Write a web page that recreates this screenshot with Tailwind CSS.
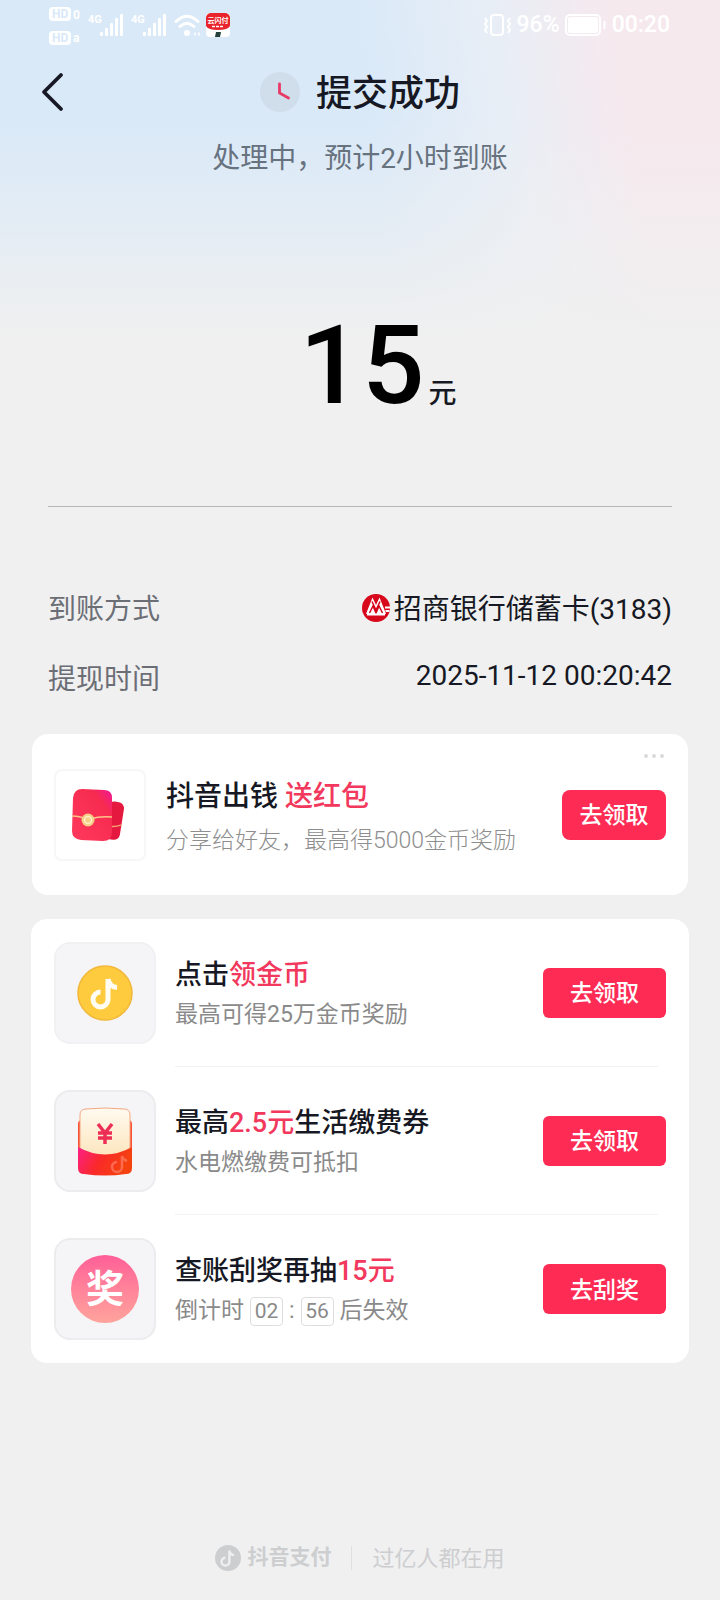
<!DOCTYPE html>
<html lang="zh-CN">
<head>
<meta charset="utf-8">
<meta name="viewport" content="width=device-width, initial-scale=1">
<title>提交成功</title>
<script src="https://cdn.jsdelivr.net/npm/@tailwindcss/browser@4"></script>
</head>
<body class="bg-[#f0f0f0] text-[#161823] [font-family:Roboto,'Noto_Sans_CJK_SC',sans-serif]">
<div class="flex min-h-screen flex-col bg-[linear-gradient(to_bottom,transparent_0,transparent_35%,#f0f0f0_100%),linear-gradient(82deg,#d9e9f8_52%,#e8eef6_70%,#f6e9ee_86%)] bg-[length:100%_340px] bg-no-repeat">

  <!-- Status bar -->
  <div class="flex h-[50px] items-center justify-between pr-[50px] pl-[49px] text-white">
    <div class="flex items-center">
      <svg class="h-[42px] w-[34px]" viewBox="0 0 34 42" fill="none">
        <g fill="#fff">
          <rect y="3" width="22" height="14" rx="4"/><rect y="27" width="22" height="14" rx="4"/>
        </g>
        <g font-family="Roboto, sans-serif" font-weight="700">
          <text x="3" y="14" font-size="12" fill="#d9e9f8">HD</text>
          <text x="3" y="38" font-size="12" fill="#d9e9f8">HD</text>
          <text x="24" y="15" font-size="12" fill="#fff">0</text>
          <text x="24" y="38" font-size="12" fill="#fff">a</text>
        </g>
      </svg>
      <svg class="ml-[5px] h-[26px] w-[36px]" viewBox="0 0 36 26" fill="#fff">
        <text x="0" y="11" font-family="Roboto, sans-serif" font-size="11" font-weight="700">4G</text>
        <rect x="12" y="20" width="3" height="4" rx="1"/><rect x="17" y="16" width="3" height="8" rx="1"/><rect x="22" y="11" width="3" height="13" rx="1"/><rect x="27" y="6" width="3" height="18" rx="1"/><rect x="32" y="2" width="3" height="22" rx="1"/>
      </svg>
      <svg class="ml-[7px] h-[26px] w-[36px]" viewBox="0 0 36 26" fill="#fff">
        <text x="0" y="11" font-family="Roboto, sans-serif" font-size="11" font-weight="700">4G</text>
        <rect x="12" y="20" width="3" height="4" rx="1"/><rect x="17" y="16" width="3" height="8" rx="1"/><rect x="22" y="11" width="3" height="13" rx="1"/><rect x="27" y="6" width="3" height="18" rx="1"/><rect x="32" y="2" width="3" height="22" rx="1"/>
      </svg>
      <svg class="ml-[7px] h-[26px] w-[26px]" viewBox="0 0 26 26" fill="none" stroke="#fff" stroke-width="3" stroke-linecap="round">
        <path d="M2 9.500Q13 -1 24 9.500M6 14.500Q13 8 20 14.500"/><circle cx="13" cy="21" r="3" fill="#fff" stroke="none"/>
        <path d="M21 21v2M25 21v2" stroke-width="1.500"/>
      </svg>
      <svg class="ml-[5px] h-[24px] w-[26px]" viewBox="0 0 26 24">
        <rect x="1" width="24" height="24" rx="4" fill="#fff"/>
        <path d="M1 5a5 5 0 0 1 5-5h14a5 5 0 0 1 5 5v8q-2 4-12 4T1 13z" fill="#e8232b"/>
        <path d="M11 19h5l-1 5h-5z" fill="#23403c"/>
        <text x="13" y="10" text-anchor="middle" font-family="'Noto Sans CJK SC', sans-serif" font-size="7" font-weight="700" fill="#fff">云闪付</text>
        <path d="M7 13.500h12" stroke="#fff" stroke-width="1.500" stroke-dasharray="3 1"/>
      </svg>
    </div>
    <div class="flex items-center text-[23px] font-medium">
      <svg class="h-[24px] w-[30px]" viewBox="0 0 30 24" fill="none" stroke="#fff" stroke-width="2">
        <rect x="8" y="2" width="12" height="20" rx="3"/><path d="M2 5l2 3-2 3 2 3-2 3 2 3M27 5l-2 3 2 3-2 3 2 3-2 3"/>
      </svg>
      <span class="ml-1">96%</span>
      <svg class="ml-1 h-[24px] w-[44px]" viewBox="0 0 44 24" fill="none" stroke="#fff" stroke-width="2">
        <rect x="2" y="2" width="34" height="20" rx="4"/><rect x="5" y="5" width="28" height="14" rx="1" fill="#fff"/><path d="M40.500 8v8"/>
      </svg>
      <span class="ml-1">00:20</span>
    </div>
  </div>

  <header class="grid h-[84px] grid-cols-[1fr_auto_1fr] items-center px-10">
    <button type="button" aria-label="返回" class="justify-self-start">
      <svg class="h-10 w-6" viewBox="0 0 24 40" fill="none" stroke="#161823" stroke-width="3.800" stroke-linecap="round" stroke-linejoin="round"><path d="M21 3L4 20l17 17"/></svg>
    </button>
    <h1 class="flex items-center gap-4 text-[36px] font-medium">
      <svg class="size-10" viewBox="0 0 40 40" fill="none"><circle cx="20" cy="20" r="20" fill="#d0deeb"/><path d="M19.500 12v9l9 5" stroke="#e83a66" stroke-width="2.800" stroke-linecap="round"/></svg>
      <span class="pt-1">提交成功</span>
    </h1>
  </header>
  <p class="pt-[7px] text-center text-[28px] leading-9 text-[#67727f]">处理中，预计2小时到账</p>

  <div class="mx-12 flex h-[330px] items-center justify-center border-b border-[#b4b8b6] pt-12 pl-9">
    <p class="flex items-baseline gap-1 text-[28px] font-medium"><span class="text-[110px] text-black">15</span>元</p>
  </div>

  <dl class="mt-[66px] px-12 text-[28px]">
    <div class="flex h-[70px] items-center justify-between">
      <dt class="pt-1 text-[#6c6e76]">到账方式</dt>
      <dd class="flex items-center gap-1">
        <svg class="size-7" viewBox="0 0 28 28"><circle cx="14" cy="14" r="14" fill="#d7081c"/>
          <path d="M4 20L10.500 3.500L14 11L17.500 3.500L22.500 16L24 20z" fill="#fff"/>
          <path d="M10 7.500L14 16L18 7.500M7.500 19L11 12L14 19L17 12L20.500 19" fill="none" stroke="#d7081c" stroke-width="1.500"/>
          <path d="M5 20.500h18M23 13.500h5M23.500 17h4" stroke="#fff" stroke-width="1.800"/></svg>
        <span class="pt-1">招商银行储蓄卡(3183)</span>
      </dd>
    </div>
    <div class="flex h-[66px] items-center justify-between">
      <dt class="pt-2 text-[#6c6e76]">提现时间</dt>
      <dd>2025-11-12 00:20:42</dd>
    </div>
  </dl>

  <section class="relative mx-8 mt-[25px] flex h-[161px] items-center rounded-2xl bg-white px-[22px]">
    <button type="button" aria-label="更多" class="absolute top-4 right-5 flex gap-1 p-1">
      <span class="size-1 rounded-full bg-[#dadada]"></span><span class="size-1 rounded-full bg-[#dadada]"></span><span class="size-1 rounded-full bg-[#dadada]"></span>
    </button>
    <div class="flex size-[92px] shrink-0 items-center justify-center rounded-lg border-2 border-[#f7f7f7]">
      <svg class="size-[60px]" viewBox="0 0 60 60">
        <defs><linearGradient id="env" x1="0" y1="1" x2="1" y2="0"><stop offset="0" stop-color="#ff3a5c"/><stop offset=".75" stop-color="#f72a50"/><stop offset="1" stop-color="#f0189a"/></linearGradient></defs>
        <g transform="rotate(9 46 36)"><rect x="36" y="17" width="16" height="38" rx="6" fill="#e5183f"/><path d="M37 42q8 1 15-3" fill="none" stroke="#f5a070" stroke-width="1.500"/></g>
        <path d="M3 13q1-9 9-9l22 1q8 0 8 8v34q0 9-9 9l-22-1q-9-1-9-9z" fill="url(#env)"/>
        <path d="M2 31q8 0 14 3h4q10-3 22-2" fill="none" stroke="#ffc489" stroke-width="1.500"/>
        <circle cx="18" cy="35" r="6.500" fill="#f5cf88"/><circle cx="18" cy="35" r="3.500" fill="none" stroke="#fff0c5" stroke-width="1.500"/>
      </svg>
    </div>
    <div class="ml-5 flex-1 pt-2">
      <h2 class="flex gap-[7px] text-[28px] leading-10 font-medium">抖音出钱<span class="text-[#f2385c]">送红包</span></h2>
      <p class="mt-1 text-[23px] leading-10 font-light text-[#8e8e8e]">分享给好友，最高得5000金币奖励</p>
    </div>
    <button type="button" class="h-[50px] w-[104px] rounded-lg bg-[#fe2c55] pt-1 text-[23px] font-medium text-white">去领取</button>
  </section>

  <ul class="mx-[31px] mt-6 rounded-2xl bg-white px-[23px]">
    <li class="flex h-[148px] items-center">
      <div class="flex size-[102px] shrink-0 items-center justify-center rounded-2xl border-2 border-[#f1f1f3] bg-[#f5f5f7]">
        <svg class="size-14" viewBox="0 0 56 56"><circle cx="28" cy="28" r="27" fill="#fecb3e" stroke="#f2b83a" stroke-width="1.500"/><path d="M31 14v20.500a7.500 7.500 0 1 1-7.500-7.500M31 14q1.500 8 9 8.500" fill="none" stroke="#fffdf3" stroke-width="5"/></svg>
      </div>
      <div class="mr-2 ml-[19px] flex h-full flex-1 items-center border-b border-[#f2f2f2]">
        <div class="flex-1 pt-1">
          <h2 class="text-[27px] leading-10 font-medium">点击<span class="text-[#f2385c]">领金币</span></h2>
          <p class="text-[23px] leading-10 text-[#8a8a8a]">最高可得25万金币奖励</p>
        </div>
        <button type="button" class="-mr-2 h-[50px] w-[123px] rounded-md bg-[#fe2c55] pt-1 text-[23px] font-medium text-white">去领取</button>
      </div>
    </li>
    <li class="flex h-[148px] items-center">
      <div class="flex size-[102px] shrink-0 items-center justify-center rounded-2xl border-2 border-[#ececee] bg-[#f5f5f7]">
        <svg class="h-[70px] w-14" viewBox="0 0 56 70">
          <defs><linearGradient id="pocket" x1="0" y1="0" x2="1" y2=".3"><stop offset="0" stop-color="#fb2087"/><stop offset=".5" stop-color="#fa2929"/><stop offset="1" stop-color="#f4430f"/></linearGradient>
          <linearGradient id="paper" x1="0" y1="0" x2="0" y2="1"><stop offset="0" stop-color="#fffaf0"/><stop offset="1" stop-color="#fde5bd"/></linearGradient></defs>
          <path d="M1 18q0-4 4-4h46q4 0 4 4v42H1z" fill="#f95034"/>
          <path d="M3 9q0-6 6-6 19-2 38 0 6 0 6 6v42H3z" fill="url(#paper)" stroke="#f5a780"/>
          <path d="M1 41q27 15 54 0v21q0 6-6 6-21 3-42 0-6 0-6-6z" fill="url(#pocket)"/>
          <path d="M21 18l7 9 7-9M21 27h14M21 32h14M28 27v11" fill="none" stroke="#ee2f55" stroke-width="3.500"/>
          <path d="M45 50v11a5 5 0 1 1-5-5M45 50q1 4 5 5" fill="none" stroke="#ff8a74" stroke-width="2.500" opacity=".6"/>
        </svg>
      </div>
      <div class="mr-2 ml-[19px] flex h-full flex-1 items-center border-b border-[#f2f2f2]">
        <div class="flex-1 pt-1">
          <h2 class="text-[27px] leading-10 font-medium">最高<span class="text-[#f2385c]">2.5元</span>生活缴费券</h2>
          <p class="text-[23px] leading-10 text-[#8a8a8a]">水电燃缴费可抵扣</p>
        </div>
        <button type="button" class="-mr-2 h-[50px] w-[123px] rounded-md bg-[#fe2c55] pt-1 text-[23px] font-medium text-white">去领取</button>
      </div>
    </li>
    <li class="flex h-[148px] items-center">
      <div class="flex size-[102px] shrink-0 items-center justify-center rounded-2xl border-2 border-[#ececee] bg-[#f5f5f7]">
        <span class="flex size-[68px] items-center justify-center rounded-full bg-linear-to-b from-[#ff5e97] to-[#ffa39c] text-[38px] leading-none font-bold text-white">奖</span>
      </div>
      <div class="mr-2 ml-[19px] flex h-full flex-1 items-center">
        <div class="flex-1 pt-1">
          <h2 class="text-[27px] leading-10 font-medium">查账刮奖再抽<span class="text-[#f2385c]">15元</span></h2>
          <p class="flex items-center gap-[6px] text-[23px] leading-10 text-[#8a8a8a]">倒计时<time class="flex h-[29px] w-[33px] items-center justify-center rounded-sm border border-[#dedede] text-[21px]">02</time>:<time class="flex h-[29px] w-[33px] items-center justify-center rounded-sm border border-[#dedede] text-[21px]">56</time>后失效</p>
        </div>
        <button type="button" class="-mr-2 h-[50px] w-[123px] rounded-md bg-[#fe2c55] pt-1 text-[23px] font-medium text-white">去刮奖</button>
      </div>
    </li>
  </ul>

  <footer class="mt-auto flex h-[84px] items-center justify-center text-[#cdced0]">
    <svg class="size-[26px]" viewBox="0 0 56 56"><circle cx="28" cy="28" r="28" fill="#cdced0"/><path d="M31 12v24a8.500 8.500 0 1 1-8.500-8.500M31 12q1.500 9 10 10" fill="none" stroke="#f0f0f0" stroke-width="5"/></svg>
    <span class="ml-[6px] text-[21px] font-bold">抖音支付</span>
    <span class="mx-5 h-6 w-px bg-[#dedfe0]"></span>
    <span class="text-[22px]">过亿人都在用</span>
  </footer>
</div>
</body>
</html>
